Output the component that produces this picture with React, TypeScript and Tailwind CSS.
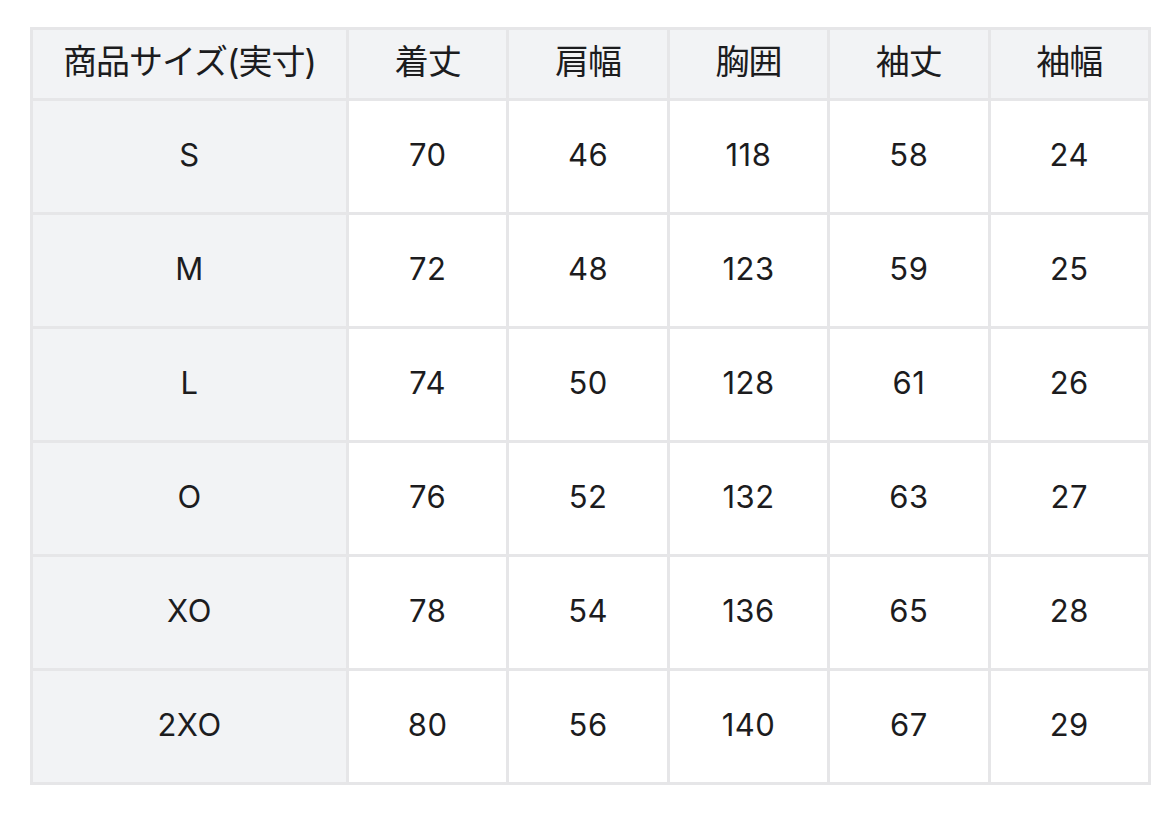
const headers = ['商品サイズ(実寸)', '着丈', '肩幅', '胸囲', '袖丈', '袖幅'];

const rows: [string, number, number, number, number, number][] = [
  ['S', 70, 46, 118, 58, 24],
  ['M', 72, 48, 123, 59, 25],
  ['L', 74, 50, 128, 61, 26],
  ['O', 76, 52, 132, 63, 27],
  ['XO', 78, 54, 136, 65, 28],
  ['2XO', 80, 56, 140, 67, 29],
];

const App = () => {
  return (
    <div className="min-h-[820px] bg-white pl-[30px] pt-[27px] font-['Inter','Noto_Sans_CJK_JP',sans-serif] text-[#1c1c1e]">
      <table className="w-[1121px] table-fixed border-collapse border-[3px] border-[#e6e6e8] text-center">
        <colgroup>
          <col className="w-[316px]" />
          <col />
          <col />
          <col />
          <col />
          <col />
        </colgroup>
        <thead>
          <tr className="h-[71px] bg-[#f2f3f5]">
            {headers.map((h) => (
              <th
                key={h}
                className="border-[3px] border-[#e6e6e8] pb-[5px] text-[34px] font-normal leading-none tracking-[-1px]"
              >
                {h}
              </th>
            ))}
          </tr>
        </thead>
        <tbody>
          {rows.map(([size, ...values]) => (
            <tr key={size} className="h-[114px]">
              <td className="border-[3px] border-[#e6e6e8] bg-[#f2f3f5] pb-[4px] text-[31px] leading-none tracking-[0.5px]">
                {size}
              </td>
              {values.map((v, i) => (
                <td
                  key={i}
                  className="border-[3px] border-[#e6e6e8] pb-[4px] text-[31px] leading-none tracking-[0.5px]"
                >
                  {v}
                </td>
              ))}
            </tr>
          ))}
        </tbody>
      </table>
    </div>
  );
};

export default App;
